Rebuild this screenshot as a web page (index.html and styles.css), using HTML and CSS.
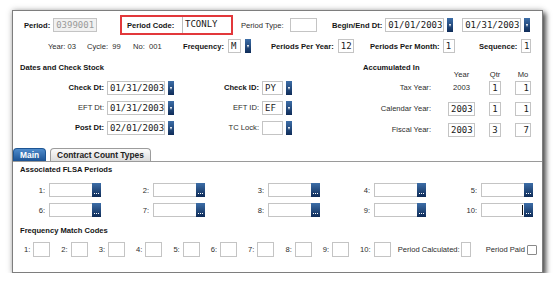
FILE: index.html
```html
<!DOCTYPE html>
<html lang="en">
<head>
    <meta charset="UTF-8">
    <title>Period Setup</title>
    <link rel="stylesheet" href="styles.css">
</head>
<body>
    <div class="panel">
        <!-- period line -->
        <div class="top">
            <div class="fld"><span class="b">Period:</span><span class="inp ro">0399001</span></div>
            <div class="fld code-box"><span class="b">Period Code:</span><span class="inp code">TCONLY</span></div>
            <div class="fld g6"><span>Period Type:</span><span class="inp w27"></span></div>
            <div class="fld"><span class="b">Begin/End Dt:</span><span class="inp date">01/01/2003</span><span class="dd"></span><span class="inp date date2">01/31/2003</span><span class="dd"></span></div>
        </div>
        <div class="sub">
            <span>Year: 03</span>
            <span>Cycle:&nbsp; 99</span>
            <span>No:&nbsp; 001</span>
            <div class="fld g4"><span class="b">Frequency:</span><span class="inp w13">M</span><span class="dd"></span></div>
            <div class="fld g4"><span class="b">Periods Per Year:</span><span class="inp w16">12</span></div>
            <div class="fld"><span class="b">Periods Per Month:</span><span class="inp w12">1</span></div>
            <div class="fld g4"><span class="b">Sequence:</span><span class="inp w10 r">1</span></div>
        </div>

        <!-- dates + accumulated -->
        <div class="mid">
            <div class="left">
                <div class="hd">Dates and Check Stock</div>
                <div class="dates">
                    <span class="rl b">Check Dt:</span>
                    <div class="fld"><span class="inp date">01/31/2003</span><span class="dd"></span></div>
                    <span class="rl b">Check ID:</span>
                    <div class="fld"><span class="inp w21">PY</span><span class="dd"></span></div>

                    <span class="rl">EFT Dt:</span>
                    <div class="fld"><span class="inp date">01/31/2003</span><span class="dd"></span></div>
                    <span class="rl">EFT ID:</span>
                    <div class="fld"><span class="inp w21">EF</span><span class="dd"></span></div>

                    <span class="rl b">Post Dt:</span>
                    <div class="fld"><span class="inp date">02/01/2003</span><span class="dd"></span></div>
                    <span class="rl">TC Lock:</span>
                    <div class="fld"><span class="inp w21"></span><span class="dd"></span></div>
                </div>
            </div>
            <div class="accum">
                <span class="hd ah">Accumulated In</span>
                <span class="colh">Year</span>
                <span class="colh">Qtr</span>
                <span class="colh">Mo</span>

                <span class="rl">Tax Year:</span>
                <span class="val">2003</span>
                <span class="inp c">1</span>
                <span class="inp r">1</span>

                <span class="rl">Calendar Year:</span>
                <span class="inp">2003</span>
                <span class="inp c">1</span>
                <span class="inp r">1</span>

                <span class="rl">Fiscal Year:</span>
                <span class="inp">2003</span>
                <span class="inp c">3</span>
                <span class="inp r">7</span>
            </div>
        </div>

        <div class="tabs">
            <span class="tab on">Main</span>
            <span class="tab">Contract Count Types</span>
        </div>

        <div class="hd sec">Associated FLSA Periods</div>
        <div class="flsa">
            <div class="cell"><span>1:</span><div class="look"><span class="box"></span><span class="dots"></span></div></div>
            <div class="cell"><span>2:</span><div class="look"><span class="box"></span><span class="dots"></span></div></div>
            <div class="cell"><span>3:</span><div class="look"><span class="box"></span><span class="dots"></span></div></div>
            <div class="cell"><span>4:</span><div class="look"><span class="box"></span><span class="dots"></span></div></div>
            <div class="cell"><span>5:</span><div class="look"><span class="box"></span><span class="dots"></span></div></div>
            <div class="cell"><span>6:</span><div class="look"><span class="box"></span><span class="dots"></span></div></div>
            <div class="cell"><span>7:</span><div class="look"><span class="box"></span><span class="dots"></span></div></div>
            <div class="cell"><span>8:</span><div class="look"><span class="box"></span><span class="dots"></span></div></div>
            <div class="cell"><span>9:</span><div class="look"><span class="box"></span><span class="dots"></span></div></div>
            <div class="cell"><span>10:</span><div class="look"><span class="box"><span class="caret"></span></span><span class="dots"></span></div></div>
        </div>

        <div class="hd sec2">Frequency Match Codes</div>
        <div class="freq">
            <div class="codes">
                <div class="fld"><span>1:</span><span class="sq"></span></div>
                <div class="fld"><span>2:</span><span class="sq"></span></div>
                <div class="fld"><span>3:</span><span class="sq"></span></div>
                <div class="fld"><span>4:</span><span class="sq"></span></div>
                <div class="fld"><span>5:</span><span class="sq"></span></div>
                <div class="fld"><span>6:</span><span class="sq"></span></div>
                <div class="fld"><span>7:</span><span class="sq"></span></div>
                <div class="fld"><span>8:</span><span class="sq"></span></div>
                <div class="fld"><span>9:</span><span class="sq"></span></div>
                <div class="fld"><span>10:</span><span class="sq"></span></div>
            </div>
            <div class="calc"><span>Period Calculated:</span><span class="sq thin"></span></div>
            <div class="paid"><span>Period Paid</span><span class="chk"></span></div>
        </div>
    </div>
</body>
</html>
```
FILE: styles.css
```css
* {
    margin: 0;
    padding: 0;
    box-sizing: border-box;
}
body {
    background-color: #fff;
    font-family: "Liberation Sans", Arial, sans-serif;
    font-size: 7.6px;
    color: #2c2c2c;
}
.panel {
    width: 531px;
    height: 263px;
    margin: 10px 0 0 12px;
    border: 1px solid #7e7e7e;
    background-color: #fff;
    box-shadow: 3px 3px 5px rgba(0, 0, 0, .65), 0 0 6px rgba(0, 0, 0, .25);
}
.b {
    font-weight: bold;
    color: #151515;
}
.fld {
    display: flex;
    align-items: center;
    gap: 3px;
    white-space: nowrap;
}
.g4 { gap: 4px; }
.g6 { gap: 6px; }

/* inputs */
.inp {
    display: block;
    height: 14px;
    border: 1px solid #c4c4c4;
    background-color: #fff;
    font-family: "DejaVu Sans Mono", monospace;
    font-size: 9px;
    line-height: 12px;
    padding: 0 2px;
    color: #1a1a1a;
    white-space: nowrap;
    overflow: hidden;
}
.inp.ro {
    width: 44px;
    background-color: #f1f1f1;
    color: #9a9a9a;
}
.inp.r { text-align: right; padding: 0 1px; }
.inp.c { text-align: center; padding: 0; }
.date { width: 59px; }
.date2 { margin-left: 6px; }
.w10 { width: 10px; }
.w12 { width: 12px; }
.w13 { width: 13px; }
.w16 { width: 16px; }
.w21 { width: 21px; }
.w27 { width: 27px; }
.dd {
    width: 6px;
    height: 14px;
    background: linear-gradient(#3d6ea8, #0f2c58);
    display: flex;
    align-items: center;
    justify-content: center;
}
.dd::after {
    content: '';
    border-left: 1.5px solid transparent;
    border-right: 1.5px solid transparent;
    border-top: 3px solid #fff;
}

/* top rows */
.top {
    display: grid;
    grid-template-columns: 96px 121px 91px auto;
    align-items: center;
    height: 20px;
    margin-top: 4px;
    padding-left: 11px;
}
.code-box {
    width: 113px;
    height: 20px;
    border: 2px solid #e2383b;
    padding-left: 5px;
    justify-content: space-between;
}
.inp.code {
    width: 49px;
    height: 16px;
    line-height: 15px;
    border: none;
    border-left: 1px solid #bdbdbd;
    padding-left: 2px;
}
.sub {
    display: grid;
    grid-template-columns: 39px 46px 50px 88px 99px 109px auto;
    align-items: center;
    height: 14px;
    margin-top: 4px;
    padding-left: 35px;
    white-space: nowrap;
}

/* dates and accumulated */
.mid {
    display: flex;
    justify-content: space-between;
    height: 82px;
    margin-top: 9px;
    padding-right: 11px;
}
.hd {
    font-weight: bold;
    color: #151515;
    line-height: 12px;
    white-space: nowrap;
}
.left .hd {
    padding-left: 7px;
}
.dates {
    display: grid;
    grid-template-columns: 91px 67px 82px auto;
    grid-auto-rows: 14px;
    column-gap: 3px;
    row-gap: 6px;
    align-items: center;
    margin-top: 7px;
}
.rl {
    text-align: right;
    line-height: 14px;
    white-space: nowrap;
}
.accum {
    display: grid;
    grid-template-columns: 71px 27px 12px 16px;
    grid-template-rows: 19px 21px 21px 21px;
    column-gap: 14px;
    align-items: start;
}
.accum .rl {
    padding-right: 3px;
}
.accum .ah {
    align-self: start;
}
.colh {
    align-self: end;
    text-align: center;
    line-height: 12px;
}
.val {
    text-align: center;
    line-height: 14px;
}

/* tabs */
.tabs {
    display: flex;
    align-items: flex-end;
    gap: 4px;
    height: 14px;
    margin-top: 4px;
    border-bottom: 1px solid #9a9a9a;
}
.tab {
    height: 13px;
    padding: 0 6px;
    font-size: 8.4px;
    font-weight: bold;
    line-height: 12px;
    color: #222;
    border: 1px solid #9c9c9c;
    border-bottom: none;
    border-radius: 4px 4px 0 0;
    background: linear-gradient(#fbfbfb, #dcdcdc);
    white-space: nowrap;
}
.tab.on {
    color: #fff;
    border-color: #1d5593;
    background: linear-gradient(#4f8ccc, #1c5394);
}

/* flsa */
.sec {
    margin-top: 2px;
    padding-left: 7px;
}
.flsa {
    display: grid;
    grid-template-columns: 88px 104px 115px 106px 107px;
    grid-auto-rows: 14px;
    row-gap: 6px;
    margin-top: 7px;
}
.cell {
    display: flex;
    justify-content: flex-end;
    align-items: center;
    gap: 4px;
}
.look {
    display: flex;
    width: 52px;
    height: 14px;
}
.look .box {
    flex: 1;
    display: flex;
    justify-content: flex-end;
    align-items: center;
    border: 1px solid #c4c4c4;
    border-right: none;
}
.look .dots {
    width: 9px;
    display: flex;
    justify-content: center;
    align-items: flex-end;
    padding-bottom: 3px;
    background: linear-gradient(#3d6ea8, #0e2b57);
}
.look .dots::after {
    content: '';
    width: 5px;
    height: 1px;
    background: repeating-linear-gradient(90deg, #fff 0 1px, transparent 1px 2px);
}
.caret {
    width: 1px;
    height: 10px;
    margin-right: 1px;
    background-color: #111;
}

/* frequency match */
.sec2 {
    margin-top: 8px;
    padding-left: 7px;
}
.freq {
    display: flex;
    align-items: center;
    gap: 7px;
    height: 15px;
    margin-top: 5px;
    padding-left: 11px;
    white-space: nowrap;
}
.codes {
    display: flex;
    gap: 11px;
}
.sq {
    width: 17px;
    height: 15px;
    border: 1px solid #c4c4c4;
}
.sq.thin {
    width: 10px;
}
.calc {
    display: flex;
    align-items: center;
    gap: 1px;
}
.paid {
    display: flex;
    align-items: center;
    gap: 2px;
    margin-left: 8px;
}
.chk {
    width: 10px;
    height: 10px;
    border: 1px solid #8a8a8a;
    border-radius: 1px;
}
```
